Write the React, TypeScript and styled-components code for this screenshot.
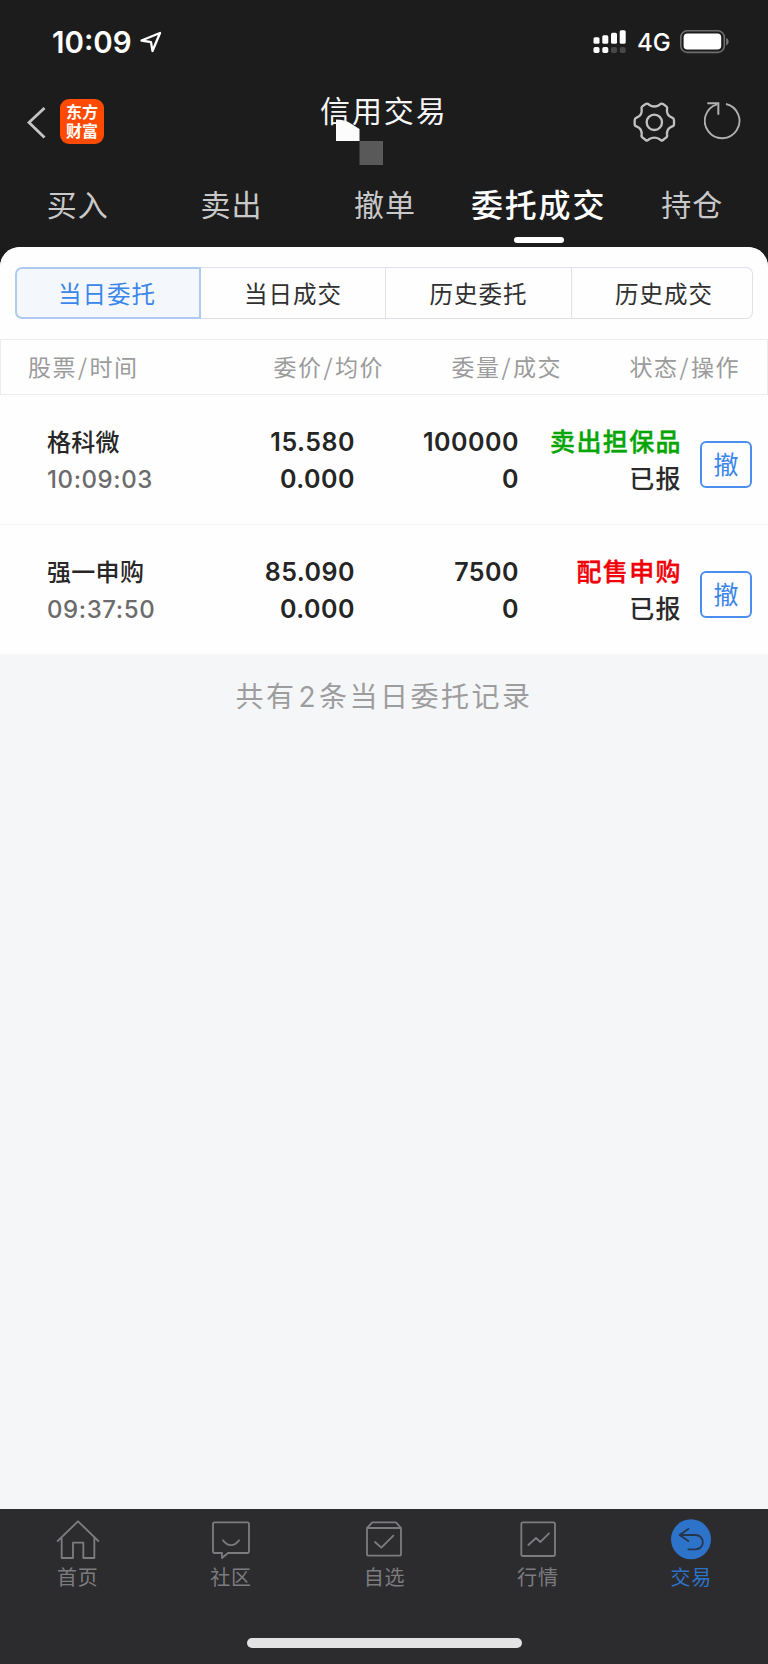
import React from "react";
import styled, { createGlobalStyle } from "styled-components";

const cjk = `"Noto Sans CJK SC", sans-serif`;
const latin = `Inter, "Noto Sans CJK SC", sans-serif`;

const GlobalStyle = createGlobalStyle`
  *, *::before, *::after { box-sizing: border-box; }
  body { margin: 0; background: #1c1c1c; font-family: ${cjk}; }
  svg { display: block; flex: none; }
`;

const Screen = styled.div`
  width: 768px;
  height: 1664px;
  display: flex;
  flex-direction: column;
  background: #1c1c1c;
  overflow: hidden;
`;

const StatusBar = styled.header`
  height: 84px;
  flex: none;
  display: flex;
  justify-content: space-between;
  padding: 0 39px 0 52px;
  align-items: center;
  color: #fff;
  font-family: ${latin};
`;

const StatusGroup = styled.div`
  display: flex;
  align-items: center;
`;

const Clock = styled.span`
  font-size: 29.5px;
  font-weight: 600;
  width: 88px;
  line-height: 36px;
  white-space: nowrap;
`;

const Network = styled.span`
  font-size: 24px;
  font-weight: 500;
  line-height: 30px;
  width: 43px;
  margin-left: 10px;
  padding-top: 2px;
`;

const NavBar = styled.div`
  position: relative;
  height: 88px;
  flex: none;
  display: flex;
  align-items: flex-start;
  padding: 15px 26px 0 27px;
`;

const BackButton = styled.div`
  margin-top: 8px;
  width: 33px;
`;

const Logo = styled.div`
  width: 44px;
  height: 45px;
  border-radius: 9px;
  background: #ff4a04;
  color: #fff;
  font-size: 16px;
  line-height: 19px;
  font-weight: 700;
  display: flex;
  flex-direction: column;
  align-items: center;
  justify-content: center;
  padding-bottom: 1px;
`;

const Title = styled.h1`
  margin: -8px 0 0;
  flex: 1;
  padding-left: 216px;
  font-size: 30px;
  line-height: 36px;
  letter-spacing: 1.9px;
  font-weight: 400;
  color: #f6f6f6;
`;

const Mosaic = styled.svg`
  position: absolute;
  left: 336px;
  top: 35px;
`;

const NavActions = styled.div`
  display: flex;
  gap: 28px;
  padding-top: 2px;
`;

const Tabs = styled.nav`
  height: 75px;
  flex: none;
  display: grid;
  grid-template-columns: repeat(5, 1fr);
`;

const Tab = styled.div<{ $active?: boolean }>`
  display: flex;
  flex-direction: column;
  align-items: center;
  white-space: nowrap;
  padding: 9px 0 0 2px;
  line-height: 44px;
  color: ${(p) => (p.$active ? "#fff" : "#c9c9c9")};
  font-size: ${(p) => (p.$active ? 32 : 30)}px;
  letter-spacing: ${(p) => (p.$active ? 1.8 : 1)}px;
  font-weight: ${(p) => (p.$active ? 500 : 400)};
  &::after {
    content: "";
    width: 50px;
    height: 6px;
    border-radius: 3px;
    margin-top: 12px;
    background: ${(p) => (p.$active ? "#fff" : "transparent")};
  }
`;

const Sheet = styled.main`
  flex: 1;
  display: flex;
  flex-direction: column;
  background: #f5f6f8;
  border-radius: 20px 20px 0 0;
  overflow: hidden;
`;

const Panel = styled.div`
  background: #fefefe;
  padding-top: 20px;
`;

const Segments = styled.div`
  display: grid;
  grid-template-columns: 186px 185px 186px 181px;
  margin: 0 15px;
  height: 52px;
`;

const Segment = styled.div<{ $active?: boolean }>`
  display: flex;
  align-items: center;
  justify-content: center;
  padding-bottom: 1px;
  font-size: 23.5px;
  letter-spacing: 1px;
  color: ${(p) => (p.$active ? "#3b86ea" : "#303030")};
  background: ${(p) => (p.$active ? "#f4f8fd" : "transparent")};
  border: 1px solid #dfe0ea;
  border-left-width: 0;
  &:first-child {
    border: 2px solid #aecaf1;
    border-radius: 7px 0 0 7px;
    padding-right: 2px;
  }
  &:last-child {
    border-radius: 0 7px 7px 0;
    padding-left: 4px;
  }
`;

const TableHead = styled.div`
  display: grid;
  grid-template-columns: 200px 156px 178px 178px;
  height: 56px;
  margin-top: 20px;
  padding: 0 28px 2px 27px;
  border: 1px solid #ededef;
  align-items: center;
  color: #9b9b9b;
  font-size: 23px;
  letter-spacing: 1.5px;
`;

const HeadCell = styled.div<{ $right?: boolean }>`
  text-align: ${(p) => (p.$right ? "right" : "left")};
  white-space: nowrap;
`;

const Slash = styled.span`
  padding: 0 1px;
`;

const Row = styled.div`
  display: grid;
  grid-template-columns: 180px 127px 164px 163px 1fr;
  height: 130px;
  padding: 28px 16px 0 47px;
  border-bottom: 1px solid #f3f3f5;
  &:last-child {
    height: 129px;
    border-bottom: 0;
  }
`;

const Cell = styled.div<{ $right?: boolean; $numeric?: boolean }>`
  display: flex;
  flex-direction: column;
  align-items: ${(p) => (p.$right ? "flex-end" : "flex-start")};
  padding-top: ${(p) => (p.$numeric ? 1 : 0)}px;
`;

const StockName = styled.span`
  font-size: 24px;
  line-height: 37px;
  margin: -1px 0 2px;
  font-weight: 500;
  letter-spacing: 0.3px;
  color: #272727;
`;

const Time = styled.span`
  font-family: ${latin};
  font-size: 24px;
  line-height: 37px;
  font-weight: 500;
  letter-spacing: 0.6px;
  color: #6b6b6b;
`;

const Figure = styled.span`
  font-family: ${latin};
  font-size: 25px;
  line-height: 37px;
  font-weight: 600;
  letter-spacing: 0.5px;
  margin-right: -1px;
  color: #252525;
`;

const Status = styled.span<{ $color?: string }>`
  position: relative;
  top: -1px;
  font-size: 25px;
  line-height: 37px;
  font-weight: 500;
  letter-spacing: 1.4px;
  margin-right: -1px;
  white-space: nowrap;
  color: ${(p) => p.$color || "#2a2a2a"};
  -webkit-text-stroke: ${(p) => (p.$color ? "0.4px" : "0")};
`;

const CancelButton = styled.button`
  justify-self: end;
  margin-top: 18px;
  width: 52px;
  height: 47px;
  padding: 0 0 2px;
  background: transparent;
  border: 2px solid #4b8fee;
  border-radius: 6px;
  color: #3b86ea;
  font: 400 25px/39px ${cjk};
`;

const Summary = styled.p`
  margin: 0;
  padding-top: 20px;
  text-align: center;
  font-size: 28px;
  line-height: 42px;
  letter-spacing: 2.5px;
  color: #9d9d9e;
`;

const Count = styled.span`
  font-family: ${latin};
  padding: 0 1px 0 2px;
`;

const BottomBar = styled.footer`
  flex: none;
  height: 155px;
  background: #2c2c2e;
  display: flex;
  flex-direction: column;
  align-items: center;
  justify-content: space-between;
  padding-bottom: 16px;
`;

const BottomTabs = styled.nav`
  width: 100%;
  display: grid;
  grid-template-columns: repeat(5, 1fr);
  padding: 9px 0 0 1px;
`;

const BottomTab = styled.div<{ $active?: boolean }>`
  display: flex;
  flex-direction: column;
  align-items: center;
  color: ${(p) => (p.$active ? "#2d73ca" : "#7c7c80")};
  font-size: 20px;
  line-height: 30px;
  letter-spacing: 0.8px;
`;

const HomeIndicator = styled.div`
  width: 275px;
  height: 10px;
  border-radius: 5px;
  background: #e3e3e3;
`;

const stroke = {
  fill: "none",
  stroke: "currentColor",
  strokeLinecap: "round" as const,
  strokeLinejoin: "round" as const,
};

const LocationIcon = () => (
  <svg width="22" height="22" viewBox="0 0 22 22" {...stroke} strokeWidth="2.3">
    <path d="M1.5 9.5 20 2 12.5 20 11 11.2Z" />
  </svg>
);

const SignalIcon = () => (
  <svg width="34" height="24" viewBox="0 0 34 24" fill="#fff">
    <rect x="0.5" y="7.3" width="6" height="6.5" rx="1.5" />
    <rect x="9.3" y="5.2" width="6" height="8.6" rx="1.5" />
    <rect x="18" y="2.8" width="6" height="11" rx="1.5" />
    <rect x="26.7" y="0.2" width="6" height="13.6" rx="1.5" />
    <rect x="0.5" y="17" width="6" height="6" rx="1.8" />
    <rect x="9.3" y="17" width="6" height="6" rx="1.8" />
    <rect x="18" y="17" width="6" height="6" rx="1.8" fill="#484848" />
    <rect x="26.7" y="17" width="6" height="6" rx="1.8" fill="#484848" />
  </svg>
);

const BatteryIcon = () => (
  <svg width="49" height="24" viewBox="0 0 49 24">
    <rect x="0.8" y="0.8" width="43.5" height="21.6" rx="6.5" fill="none" stroke="#6d6d6d" strokeWidth="1.6" />
    <rect x="3.6" y="3.6" width="37.6" height="16" rx="3.8" fill="#fff" />
    <path d="M46.2 8v7.4c1.5-.6 2.4-2 2.4-3.7s-.9-3.1-2.4-3.7Z" fill="#777" />
  </svg>
);

const ChevronIcon = () => (
  <svg width="19" height="32" viewBox="0 0 19 32" fill="none" stroke="#c4c4c4" strokeWidth="2.8">
    <path d="M17.5 1 2 15.5 17.5 30.5" />
  </svg>
);

const GearIcon = () => (
  <svg width="43" height="42" viewBox="747 303 129 126" fill="none" stroke="#c0c0c0" strokeWidth="7" strokeLinejoin="round">
    <path d="M785 312Q790 309 795 314Q811 325 827 314Q832 309 837 312L847 319Q851 322 849 328Q847 346 863 352Q870 355 870 360V373Q870 378 863 380Q848 386 849 404Q851 410 846 413L837 420Q832 424 827 418Q811 408 795 418Q790 424 785 420L776 413Q771 410 773 404Q774 386 759 380Q752 378 752 373V360Q752 355 759 352Q775 346 773 328Q771 322 775 319Z" />
    <circle cx="811" cy="367" r="23" />
  </svg>
);

const ReloadIcon = () => (
  <svg width="38" height="39" viewBox="957 309 114 117" fill="none" stroke="#b0b0b0" strokeWidth="5.5">
    <path d="M1023 318A52 52 0 1 1 996 319" />
    <path d="M967 316H1000V350" strokeWidth="6" />
  </svg>
);

const HomeIcon = () => (
  <svg width="44" height="44" viewBox="166 82 132 132" {...stroke} strokeWidth="5.5">
    <path d="M171 151 232 92 293 151M183 141V202H217V156H248V202H281V141" />
  </svg>
);

const CommunityIcon = () => (
  <svg width="44" height="44" viewBox="627 82 132 132" {...stroke} strokeWidth="5.5">
    <path d="M644 95H742Q747 95 747 100V182Q747 187 742 187H684L666 202V187H644Q639 187 639 182V100Q639 95 644 95Z" />
    <path d="M669 149Q693 178 717 149" />
  </svg>
);

const WatchlistIcon = () => (
  <svg width="44" height="44" viewBox="1087 82 132 132" {...stroke} strokeWidth="5.5">
    <path d="M1102 112 1118 95H1189L1204 112V190Q1204 195 1199 195H1107Q1102 195 1102 190ZM1102 112H1204M1126 154 1145 171 1181 135" />
  </svg>
);

const MarketIcon = () => (
  <svg width="44" height="44" viewBox="396 82 132 132" {...stroke} strokeWidth="5.5">
    <rect x="412" y="95" width="101" height="101" rx="5" />
    <path d="M433 163 456 142 469 154 495 128" />
  </svg>
);

const TradeIcon = () => (
  <svg width="44" height="44" viewBox="857 82 132 132" fill="none">
    <circle cx="923" cy="146" r="60" fill="#2d73ca" />
    <path d="M915 115 889 133 915 151M891 133H937A21 21 0 0 1 937 176H915" stroke="#25354c" strokeWidth="5.5" strokeLinejoin="round" strokeLinecap="round" />
  </svg>
);

const tabs = ["买入", "卖出", "撤单", "委托成交", "持仓"];
const segments = ["当日委托", "当日成交", "历史委托", "历史成交"];
const columns = [
  ["股票", "时间"],
  ["委价", "均价"],
  ["委量", "成交"],
  ["状态", "操作"],
];
const orders = [
  { name: "格科微", time: "10:09:03", price: "15.580", avg: "0.000", qty: "100000", filled: "0", side: "卖出担保品", color: "#05a505", state: "已报" },
  { name: "强一申购", time: "09:37:50", price: "85.090", avg: "0.000", qty: "7500", filled: "0", side: "配售申购", color: "#f00008", state: "已报" },
];
const bottomTabs = [
  { label: "首页", Icon: HomeIcon },
  { label: "社区", Icon: CommunityIcon },
  { label: "自选", Icon: WatchlistIcon },
  { label: "行情", Icon: MarketIcon },
  { label: "交易", Icon: TradeIcon },
];

export default function App() {
  return (
    <>
      <GlobalStyle />
      <Screen>
        <StatusBar>
          <StatusGroup>
            <Clock>10:09</Clock>
            <LocationIcon />
          </StatusGroup>
          <StatusGroup>
            <SignalIcon />
            <Network>4G</Network>
            <BatteryIcon />
          </StatusGroup>
        </StatusBar>
        <NavBar>
          <BackButton>
            <ChevronIcon />
          </BackButton>
          <Logo>
            <span>东方</span>
            <span>财富</span>
          </Logo>
          <Title>信用交易</Title>
          <Mosaic width="48" height="47" viewBox="0 0 48 47">
            <path d="M0 .5Q9 .5 14 4L23.5 10V22H0Z" fill="#fcfcfc" />
            <rect x="23.5" y="22" width="23.5" height="24" fill="#595959" />
          </Mosaic>
          <NavActions>
            <GearIcon />
            <ReloadIcon />
          </NavActions>
        </NavBar>
        <Tabs>
          {tabs.map((t, i) => (
            <Tab key={t} $active={i === 3}>{t}</Tab>
          ))}
        </Tabs>
        <Sheet>
          <Panel>
            <Segments>
              {segments.map((s, i) => (
                <Segment key={s} $active={i === 0}>{s}</Segment>
              ))}
            </Segments>
            <TableHead>
              {columns.map(([a, b], i) => (
                <HeadCell key={a} $right={i > 0}>
                  {a}<Slash>/</Slash>{b}
                </HeadCell>
              ))}
            </TableHead>
            {orders.map((o) => (
              <Row key={o.name}>
                <Cell>
                  <StockName>{o.name}</StockName>
                  <Time>{o.time}</Time>
                </Cell>
                <Cell $right $numeric>
                  <Figure>{o.price}</Figure>
                  <Figure>{o.avg}</Figure>
                </Cell>
                <Cell $right $numeric>
                  <Figure>{o.qty}</Figure>
                  <Figure>{o.filled}</Figure>
                </Cell>
                <Cell $right>
                  <Status $color={o.color}>{o.side}</Status>
                  <Status>{o.state}</Status>
                </Cell>
                <CancelButton>撤</CancelButton>
              </Row>
            ))}
          </Panel>
          <Summary>
            共有<Count>2</Count>条当日委托记录
          </Summary>
        </Sheet>
        <BottomBar>
          <BottomTabs>
            {bottomTabs.map(({ label, Icon }, i) => (
              <BottomTab key={label} $active={i === 4}>
                <Icon />
                {label}
              </BottomTab>
            ))}
          </BottomTabs>
          <HomeIndicator />
        </BottomBar>
      </Screen>
    </>
  );
}
